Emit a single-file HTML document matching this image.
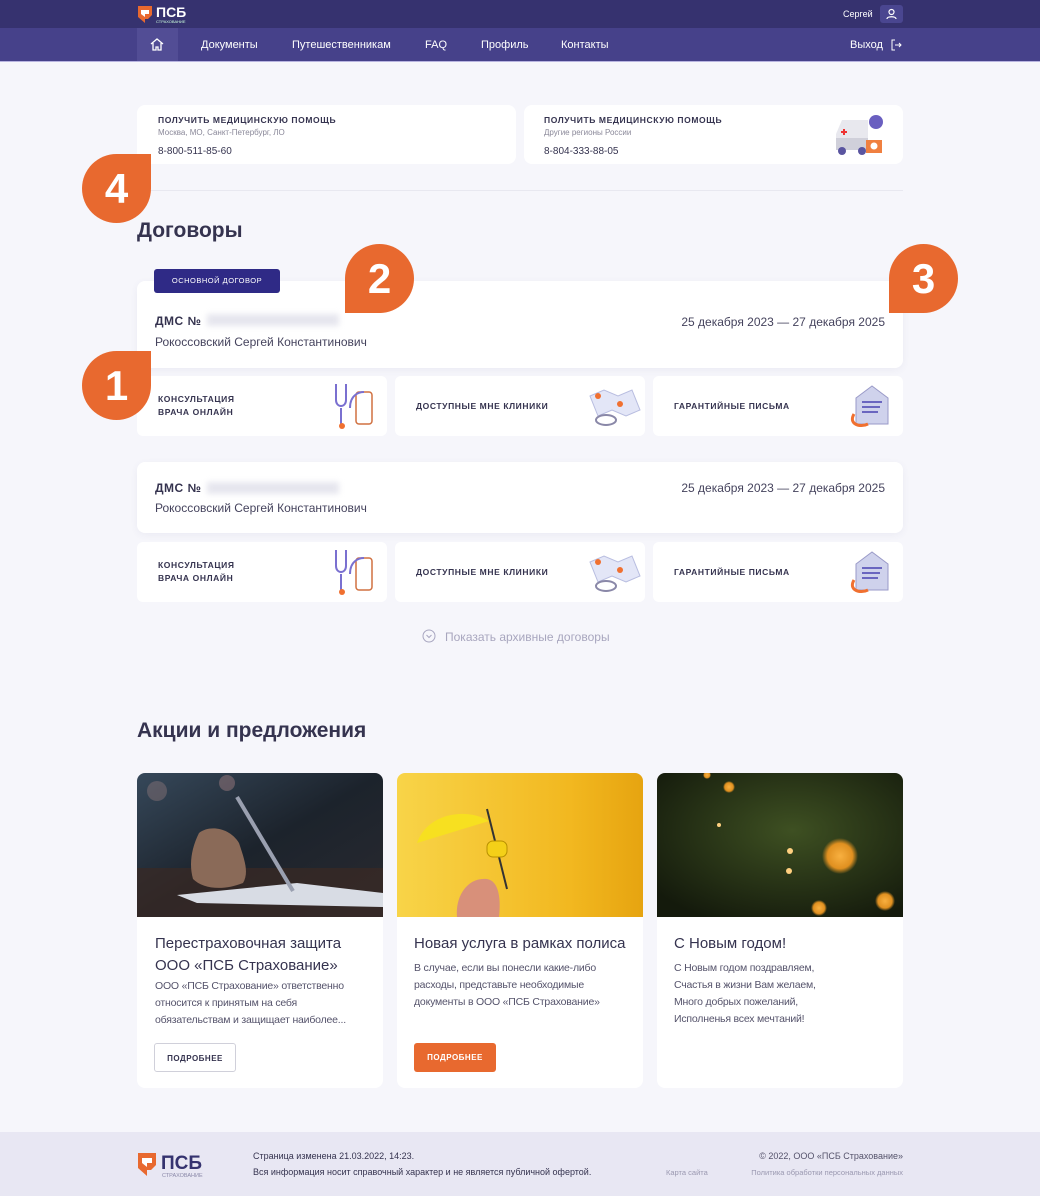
<!DOCTYPE html>
<html><head><meta charset="utf-8"><style>
*{box-sizing:border-box;margin:0;padding:0}
body{width:1040px;height:1196px;background:#f6f6fb;font-family:"Liberation Sans",sans-serif;color:#35334f;position:relative;overflow:hidden}
.a{position:absolute}
.card{position:absolute;background:#fff;border-radius:8px}
.cap{font-size:9px;font-weight:bold;letter-spacing:.6px;color:#35334f}
.badge{position:absolute;width:69px;height:69px;background:#e8692f;border-radius:50%;color:#fff;font-size:42px;font-weight:bold;text-align:center;line-height:69px}
.tr{border-top-right-radius:0}.bl{border-bottom-left-radius:0}
.nav span{position:absolute;top:39px;font-size:11px;color:#fff}
.h2{font-size:21px;color:#35334f;font-weight:bold}
.sv{position:absolute;height:60px;background:#fff;border-radius:6px}
.sv .cap{position:absolute;left:21px;font-size:8.5px;line-height:13px}
.ttl{font-size:15px;line-height:22px;color:#35334f}
.txt{font-size:10.5px;line-height:17px;color:#55536b;letter-spacing:-.2px}
.btn{position:absolute;width:82px;height:29px;border-radius:3px;font-size:8px;font-weight:bold;letter-spacing:.5px;text-align:center;line-height:29px}
</style></head><body>
<div class="a" style="left:0;top:0;width:1040px;height:28px;background:#36326f"></div>
<div class="a" style="left:0;top:28px;width:1040px;height:33px;background:#46418a"></div>
<div class="a" style="left:0;top:61px;width:1040px;height:1px;background:#b8b4e0"></div>
<svg class="a" style="left:137px;top:4px" width="60" height="20" viewBox="0 0 60 20"><path d="M1 2h14v9l-4 4H8v4L1 13z" fill="#e8692f"/><path d="M4 6h8v4H8v3L4 10z" fill="#fff"/><text x="19" y="13" font-size="14" font-weight="bold" fill="#fff" font-family="Liberation Sans">ПСБ</text><text x="19" y="19" font-size="4" fill="#cfd" font-family="Liberation Sans">СТРАХОВАНИЕ</text></svg>
<div class="a" style="left:843px;top:9px;font-size:9px;color:#fff">Сергей</div>
<div class="a" style="left:880px;top:5px;width:23px;height:18px;background:#4a4690;border-radius:3px"><svg width="23" height="18"><circle cx="11.5" cy="7" r="2.5" fill="none" stroke="#fff" stroke-width="1.2"/><path d="M7 14c0-3 9-3 9 0" fill="none" stroke="#fff" stroke-width="1.2"/></svg></div>
<div class="a" style="left:137px;top:28px;width:41px;height:33px;background:#524d95"></div>
<svg class="a" style="left:149px;top:37px" width="16" height="15"><path d="M2 7L8 2l6 5M4 6v7h3v-3h2v3h3V6" fill="none" stroke="#fff" stroke-width="1.3"/></svg>
<div class="nav"><span style="left:201px">Документы</span><span style="left:292px">Путешественникам</span><span style="left:425px">FAQ</span><span style="left:481px">Профиль</span><span style="left:561px">Контакты</span><span style="left:850px">Выход</span></div>
<svg class="a" style="left:890px;top:39px" width="12" height="12"><path d="M5 1H2v10h3M5 6h6M9 4l2 2-2 2" fill="none" stroke="#fff" stroke-width="1"/></svg>

<div class="card" style="left:137px;top:105px;width:379px;height:59px"></div>
<div class="a cap" style="left:158px;top:115px;font-size:8.5px">ПОЛУЧИТЬ МЕДИЦИНСКУЮ ПОМОЩЬ</div>
<div class="a" style="left:158px;top:128px;font-size:8px;color:#8a8899">Москва, МО, Санкт-Петербург, ЛО</div>
<div class="a" style="left:158px;top:146px;font-size:10px">8-800-511-85-60</div>
<div class="card" style="left:524px;top:105px;width:379px;height:59px"></div>
<div class="a cap" style="left:544px;top:115px;font-size:8.5px">ПОЛУЧИТЬ МЕДИЦИНСКУЮ ПОМОЩЬ</div>
<div class="a" style="left:544px;top:128px;font-size:8px;color:#8a8899">Другие регионы России</div>
<div class="a" style="left:544px;top:146px;font-size:10px">8-804-333-88-05</div>
<svg class="a" style="left:832px;top:112px" width="56" height="44"><circle cx="44" cy="10" r="7" fill="#6a5fc0"/><path d="M4 22l6-14h26v26H4z" fill="#e8e8ee"/><path d="M4 26h32v12H4z" fill="#d0d0da"/><circle cx="10" cy="39" r="4" fill="#5a55a0"/><circle cx="30" cy="39" r="4" fill="#5a55a0"/><path d="M9 20h6M12 17v6" stroke="#e33" stroke-width="2"/><rect x="34" y="28" width="16" height="13" fill="#f08040"/><circle cx="42" cy="34" r="3.5" fill="#fff"/></svg>
<div class="a" style="left:137px;top:190px;width:766px;height:1px;background:#e8e8f0"></div>

<div class="a h2" style="left:137px;top:219px">Договоры</div>

<div class="card" style="left:137px;top:281px;width:766px;height:87px;box-shadow:0 2px 8px rgba(60,60,120,.06)"></div>
<div class="a" style="left:154px;top:269px;width:126px;height:24px;background:#2f2a86;border-radius:3px;color:#fff;font-size:7.5px;letter-spacing:.5px;text-align:center;line-height:24px">ОСНОВНОЙ ДОГОВОР</div>
<div class="a" style="left:155px;top:314px;font-size:12px;font-weight:bold;letter-spacing:.5px">ДМС №</div>
<div class="a" style="left:207px;top:314px;width:132px;height:12px;background:#e6e6ee;filter:blur(3px)"></div>
<div class="a" style="left:155px;top:335px;font-size:12px;color:#45435d">Рокоссовский Сергей Константинович</div>
<div class="a" style="right:155px;top:315px;font-size:12px;color:#45435d">25 декабря 2023 — 27 декабря 2025</div>

<div class="sv" style="left:137px;top:376px;width:250px"><div class="cap" style="top:17px">КОНСУЛЬТАЦИЯ<br>ВРАЧА ОНЛАЙН</div></div>
<div class="sv" style="left:395px;top:376px;width:250px"><div class="cap" style="top:24px">ДОСТУПНЫЕ МНЕ КЛИНИКИ</div></div>
<div class="sv" style="left:653px;top:376px;width:250px"><div class="cap" style="top:24px">ГАРАНТИЙНЫЕ ПИСЬМА</div></div>

<div class="card" style="left:137px;top:462px;width:766px;height:71px;box-shadow:0 2px 8px rgba(60,60,120,.06)"></div>
<div class="a" style="left:155px;top:481px;font-size:12px;font-weight:bold;letter-spacing:.5px">ДМС №</div>
<div class="a" style="left:207px;top:482px;width:132px;height:12px;background:#e6e6ee;filter:blur(3px)"></div>
<div class="a" style="left:155px;top:501px;font-size:12px;color:#45435d">Рокоссовский Сергей Константинович</div>
<div class="a" style="right:155px;top:481px;font-size:12px;color:#45435d">25 декабря 2023 — 27 декабря 2025</div>

<div class="sv" style="left:137px;top:542px;width:250px"><div class="cap" style="top:17px">КОНСУЛЬТАЦИЯ<br>ВРАЧА ОНЛАЙН</div></div>
<div class="sv" style="left:395px;top:542px;width:250px"><div class="cap" style="top:24px">ДОСТУПНЫЕ МНЕ КЛИНИКИ</div></div>
<div class="sv" style="left:653px;top:542px;width:250px"><div class="cap" style="top:24px">ГАРАНТИЙНЫЕ ПИСЬМА</div></div>

<svg class="a" style="left:330px;top:380px" width="54" height="54"><path d="M6 4v16c0 8 10 8 10 0V4M11 28v16" fill="none" stroke="#7a70d0" stroke-width="2"/><circle cx="12" cy="46" r="3" fill="#f07030"/><rect x="26" y="12" width="16" height="32" rx="3" fill="#fff" stroke="#d07040" stroke-width="1.5"/><path d="M20 28c0-14 10-16 14-16" fill="none" stroke="#7a70d0" stroke-width="2"/></svg>
<svg class="a" style="left:330px;top:546px" width="54" height="54"><path d="M6 4v16c0 8 10 8 10 0V4M11 28v16" fill="none" stroke="#7a70d0" stroke-width="2"/><circle cx="12" cy="46" r="3" fill="#f07030"/><rect x="26" y="12" width="16" height="32" rx="3" fill="#fff" stroke="#d07040" stroke-width="1.5"/><path d="M20 28c0-14 10-16 14-16" fill="none" stroke="#7a70d0" stroke-width="2"/></svg>
<svg class="a" style="left:586px;top:384px" width="56" height="46"><path d="M4 12l14-6 14 6 14-6 8 20-14 6-14-6-14 6z" fill="#e3e6f7" stroke="#b8bde0"/><ellipse cx="20" cy="36" rx="10" ry="5" fill="none" stroke="#8a88a8" stroke-width="2"/><circle cx="12" cy="12" r="3" fill="#f07030"/><circle cx="34" cy="20" r="3" fill="#f07030"/></svg>
<svg class="a" style="left:586px;top:550px" width="56" height="46"><path d="M4 12l14-6 14 6 14-6 8 20-14 6-14-6-14 6z" fill="#e3e6f7" stroke="#b8bde0"/><ellipse cx="20" cy="36" rx="10" ry="5" fill="none" stroke="#8a88a8" stroke-width="2"/><circle cx="12" cy="12" r="3" fill="#f07030"/><circle cx="34" cy="20" r="3" fill="#f07030"/></svg>
<svg class="a" style="left:846px;top:382px" width="48" height="50"><path d="M10 16L26 4l16 12v26H10z" fill="#cfd2ec" stroke="#9a9ac8"/><path d="M16 20h20M16 25h18M16 30h16" stroke="#6a66c0" stroke-width="2"/><path d="M8 32c-6 10 6 14 14 10" fill="none" stroke="#f07030" stroke-width="3"/></svg>
<svg class="a" style="left:846px;top:548px" width="48" height="50"><path d="M10 16L26 4l16 12v26H10z" fill="#cfd2ec" stroke="#9a9ac8"/><path d="M16 20h20M16 25h18M16 30h16" stroke="#6a66c0" stroke-width="2"/><path d="M8 32c-6 10 6 14 14 10" fill="none" stroke="#f07030" stroke-width="3"/></svg>

<svg class="a" style="left:422px;top:629px" width="14" height="14"><circle cx="7" cy="7" r="6" fill="none" stroke="#a8a6c0"/><path d="M4.5 6l2.5 2.5L9.5 6" fill="none" stroke="#a8a6c0"/></svg>
<div class="a" style="left:445px;top:630px;font-size:12px;color:#a8a6be">Показать архивные договоры</div>

<div class="a h2" style="left:137px;top:719px">Акции и предложения</div>

<div class="card" style="left:137px;top:773px;width:246px;height:315px;overflow:hidden"><svg width="246" height="144" style="display:block"><defs><linearGradient id="g1" x1="0" y1="0" x2="1" y2="1"><stop offset="0" stop-color="#36485a"/><stop offset=".5" stop-color="#1c232c"/><stop offset="1" stop-color="#2a2a30"/></linearGradient></defs><rect width="246" height="144" fill="url(#g1)"/><rect x="0" y="95" width="246" height="49" fill="#3a2a24" opacity=".7"/><path d="M40 122l120-12 86 10v14L60 130z" fill="#d8dce4"/><path d="M62 60c10-8 30-6 40 10 6 18 10 30 4 40-20 8-40 6-50-4-4-14-2-30 6-46z" fill="#8a6a58"/><path d="M100 24l56 94" stroke="#9aa0b0" stroke-width="4"/><circle cx="20" cy="18" r="10" fill="#a88" opacity=".35"/><circle cx="90" cy="10" r="8" fill="#c99" opacity=".35"/></svg></div>
<div class="card" style="left:397px;top:773px;width:246px;height:315px;overflow:hidden"><svg width="246" height="144" style="display:block"><defs><linearGradient id="g2" x1="0" y1="0" x2="1" y2="0"><stop offset="0" stop-color="#f8d448"/><stop offset=".7" stop-color="#f2b820"/><stop offset="1" stop-color="#e6a410"/></linearGradient></defs><rect width="246" height="144" fill="url(#g2)"/><path d="M20 70c10-30 50-36 72-22z" fill="#f7e020"/><path d="M90 36l20 80" stroke="#333" stroke-width="2"/><rect x="90" y="68" width="20" height="16" rx="6" fill="#f4d018" stroke="#b89000"/><path d="M60 144c-2-20 10-40 30-38 12 2 14 20 12 38z" fill="#d8907a"/></svg></div>
<div class="card" style="left:657px;top:773px;width:246px;height:315px;overflow:hidden"><svg width="246" height="144" style="display:block"><defs><radialGradient id="g3" cx=".55" cy=".4" r=".7"><stop offset="0" stop-color="#3e5022"/><stop offset="1" stop-color="#141a0c"/></radialGradient><radialGradient id="b"><stop offset="0" stop-color="#f8b040"/><stop offset=".7" stop-color="#e09020"/><stop offset="1" stop-color="#e09020" stop-opacity="0"/></radialGradient></defs><rect width="246" height="144" fill="url(#g3)"/><circle cx="183" cy="83" r="18" fill="url(#b)"/><circle cx="228" cy="128" r="10" fill="url(#b)"/><circle cx="162" cy="135" r="8" fill="url(#b)"/><circle cx="50" cy="2" r="4" fill="url(#b)"/><circle cx="72" cy="14" r="6" fill="url(#b)"/><circle cx="133" cy="78" r="3" fill="#ffd080"/><circle cx="132" cy="98" r="3" fill="#ffd080"/><circle cx="62" cy="52" r="2" fill="#ffd080"/></svg></div>

<div class="a ttl" style="left:155px;top:933px">Перестраховочная защита<br>ООО «ПСБ Страхование»</div>
<div class="a txt" style="left:155px;top:978px">ООО «ПСБ Страхование» ответственно<br>относится к принятым на себя<br>обязательствам и защищает наиболее...</div>
<div class="btn" style="left:154px;top:1043px;border:1px solid #d0d0da;color:#35334f">ПОДРОБНЕЕ</div>
<div class="a ttl" style="left:414px;top:933px">Новая услуга в рамках полиса</div>
<div class="a txt" style="left:414px;top:960px">В случае, если вы понесли какие-либо<br>расходы, представьте необходимые<br>документы в ООО «ПСБ Страхование»</div>
<div class="btn" style="left:414px;top:1043px;background:#e8692f;color:#fff">ПОДРОБНЕЕ</div>
<div class="a ttl" style="left:674px;top:933px">С Новым годом!</div>
<div class="a txt" style="left:674px;top:960px">С Новым годом поздравляем,<br>Счастья в жизни Вам желаем,<br>Много добрых пожеланий,<br>Исполненья всех мечтаний!</div>

<div class="a" style="left:0;top:1132px;width:1040px;height:64px;background:#e8e7f3"></div>
<svg class="a" style="left:137px;top:1150px" width="80" height="30"><path d="M1 3h18v12l-5 5h-4v6L1 18z" fill="#e8692f"/><path d="M5 8h10v5h-5v4L5 13z" fill="#fff"/><text x="24" y="19" font-size="19" font-weight="bold" fill="#35336f" font-family="Liberation Sans">ПСБ</text><text x="25" y="27" font-size="5.5" fill="#8a88a8" font-family="Liberation Sans">СТРАХОВАНИЕ</text></svg>
<div class="a" style="left:253px;top:1151px;font-size:9px;color:#35334f">Страница изменена 21.03.2022, 14:23.</div>
<div class="a" style="left:253px;top:1167px;font-size:9px;color:#35334f">Вся информация носит справочный характер и не является публичной офертой.</div>
<div class="a" style="right:137px;top:1151px;font-size:9px;color:#55536b">© 2022, ООО «ПСБ Страхование»</div>
<div class="a" style="left:666px;top:1168px;font-size:7.5px;color:#9a98b0">Карта сайта</div>
<div class="a" style="right:137px;top:1168px;font-size:7.5px;color:#9a98b0">Политика обработки персональных данных</div>

<div class="badge tr" style="left:82px;top:154px">4</div>
<div class="badge bl" style="left:345px;top:244px">2</div>
<div class="badge bl" style="left:889px;top:244px">3</div>
<div class="badge tr" style="left:82px;top:351px">1</div>
</body></html>
